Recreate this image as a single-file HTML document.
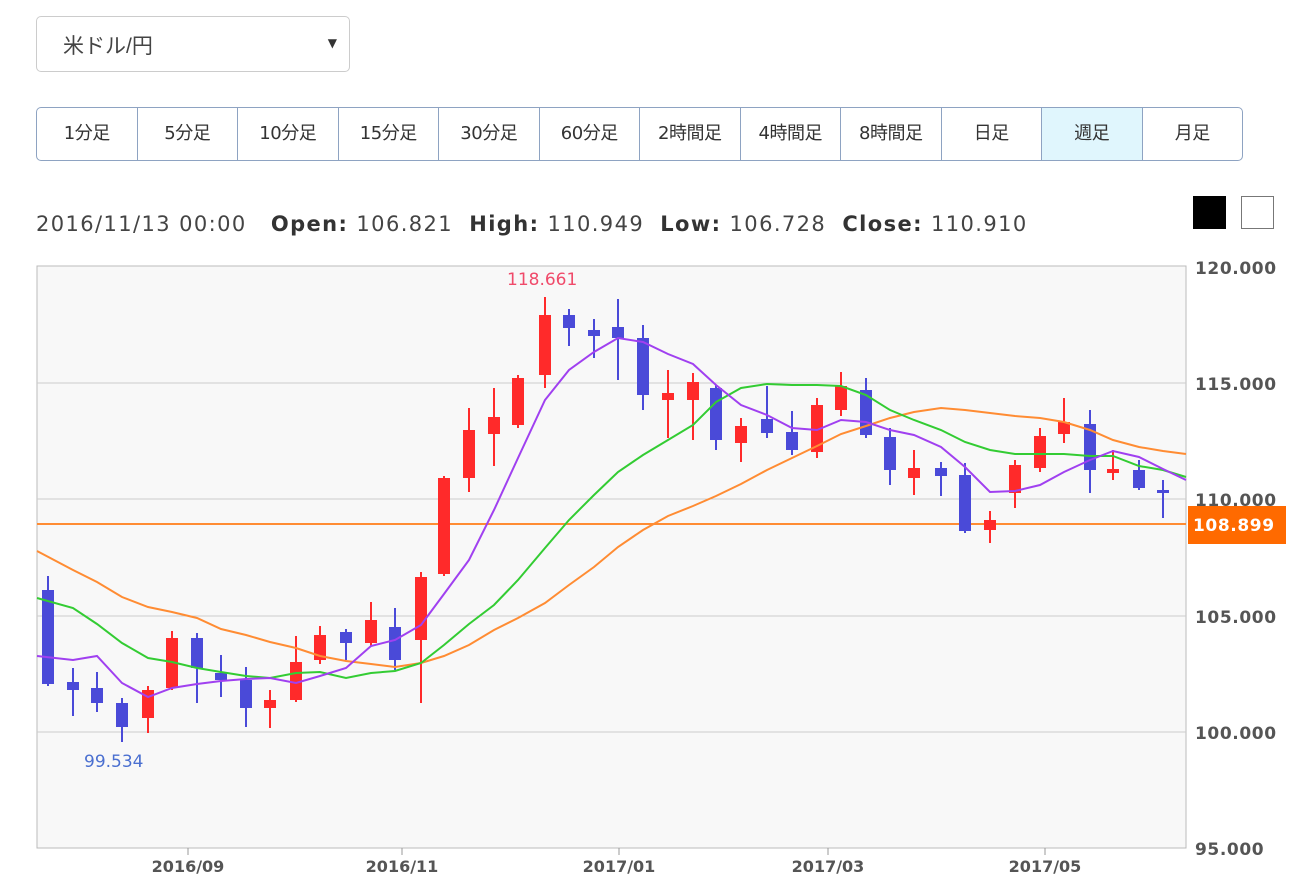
<!DOCTYPE html>
<html><head><meta charset="utf-8"><style>
body{margin:0;background:#fff;width:1300px;height:885px;overflow:hidden;font-family:"DejaVu Sans","Noto Sans CJK JP",sans-serif;color:#333}
.sel{position:absolute;left:36px;top:16px;width:314px;height:56px;border:1px solid #ccc;border-radius:5px;box-sizing:border-box}
.sel span{position:absolute;left:26px;top:13px;font-size:21px;color:#444;font-family:"Liberation Sans","Noto Sans CJK JP",sans-serif}
.sel i{position:absolute;right:12px;top:19px;font-style:normal;font-size:12px;color:#333}
.bar{position:absolute;left:36px;top:107px;width:1207px;height:54px;border:1px solid #8ea3c2;border-radius:5px;box-sizing:border-box;display:flex;overflow:hidden}
.bar div{flex:1;border-right:1px solid #8ea3c2;text-align:center;line-height:52px;font-size:18px;color:#333;letter-spacing:-0.5px}
.bar div:last-child{border-right:none}
.bar .on{background:#e0f6fd}
.hd{position:absolute;left:36px;top:212px;font-size:21px;letter-spacing:1.4px;color:#444;white-space:pre}
.hd b{color:#333}
</style></head><body>
<div class="sel"><span>米ドル/円</span><i>▼</i></div>
<div class="bar"><div>1分足</div><div>5分足</div><div>10分足</div><div>15分足</div><div>30分足</div><div>60分足</div><div>2時間足</div><div>4時間足</div><div>8時間足</div><div>日足</div><div class="on">週足</div><div>月足</div></div>
<div class="hd">2016/11/13 00:00   <b>Open:</b> 106.821  <b>High:</b> 110.949  <b>Low:</b> 106.728  <b>Close:</b> 110.910</div>
<div style="position:absolute;left:1193px;top:196px;width:33px;height:33px;background:#000"></div>
<div style="position:absolute;left:1241px;top:196px;width:33px;height:33px;border:1px solid #777;box-sizing:border-box"></div>
<svg style="position:absolute;left:0;top:0" width="1300" height="885" id="s">
<rect x="37" y="266" width="1149" height="582" fill="#f8f8f8" stroke="#bbb"/>
<g stroke="#ccc"><line x1="37" x2="1186" y1="383" y2="383"/><line x1="37" x2="1186" y1="499" y2="499"/><line x1="37" x2="1186" y1="616" y2="616"/><line x1="37" x2="1186" y1="732" y2="732"/></g>
<line x1="37" x2="1186" y1="524" y2="524" stroke="#ff8c33" stroke-width="2"/>
<g id="c"></g>
<polyline fill="none" stroke="#ff8c33" stroke-width="2" points="37,551 73,570 97,582 122,597 148,607 172,612 197,618 221,629 246,635 270,642 296,648 320,656 346,661 371,664 395,667 421,663 444,656 469,645 494,630 518,618 545,603 569,585 594,567 618,547 643,530 668,516 693,506 716,496 741,484 767,470 792,458 817,446 841,434 866,426 890,418 914,412 941,408 965,410 990,413 1015,416 1040,418 1064,422 1090,430 1113,440 1139,447 1163,451 1186,454"/>
<polyline fill="none" stroke="#33cc33" stroke-width="2" points="37,598 73,608 97,624 122,643 148,658 172,662 197,668 221,672 246,676 270,678 296,673 320,672 346,678 371,673 395,671 421,663 444,645 469,624 494,605 518,580 545,548 569,520 594,495 618,472 643,455 668,440 693,425 716,402 741,388 767,384 792,385 817,385 841,386 866,395 890,410 914,420 941,430 965,442 990,450 1015,454 1040,454 1064,454 1090,456 1113,456 1139,466 1163,470 1186,477"/>
<polyline fill="none" stroke="#a040f0" stroke-width="2" points="37,656 73,660 97,656 122,683 148,697 172,688 197,684 221,681 246,679 270,678 296,683 320,676 346,668 371,646 395,640 421,625 444,594 469,560 494,510 518,458 545,400 569,370 594,352 618,338 643,342 668,354 693,364 716,385 741,405 767,415 792,428 817,430 841,420 866,422 890,430 914,435 941,447 965,467 990,492 1015,491 1040,485 1064,472 1090,460 1113,451 1139,457 1163,469 1186,480"/>
<g fill="#555" font-size="17" font-weight="bold" letter-spacing="0.6"><text x="1195" y="274">120.000</text><text x="1195" y="390">115.000</text><text x="1195" y="506">110.000</text><text x="1195" y="623">105.000</text><text x="1195" y="739">100.000</text><text x="1195" y="855">95.000</text></g>
<rect x="1188" y="506" width="98" height="38" fill="#ff6a00"/>
<text x="1193" y="531" fill="#fff" font-size="17" font-weight="bold" letter-spacing="0.6">108.899</text>
<text x="507" y="285" fill="#f04a6a" font-size="17">118.661</text>
<text x="84" y="767" fill="#4a6fd0" font-size="17">99.534</text>
<g stroke="#999"><line x1="188" x2="188" y1="848" y2="855"/><line x1="402" x2="402" y1="848" y2="855"/><line x1="619" x2="619" y1="848" y2="855"/><line x1="828" x2="828" y1="848" y2="855"/><line x1="1045" x2="1045" y1="848" y2="855"/></g>
<g fill="#555" font-size="16" font-weight="bold" text-anchor="middle"><text x="188" y="872">2016/09</text><text x="402" y="872">2016/11</text><text x="619" y="872">2017/01</text><text x="828" y="872">2017/03</text><text x="1045" y="872">2017/05</text></g>
</svg>
<script>
var d=[[48,590,684,576,686,0],[73,682,690,668,716,0],[97,688,703,672,712,0],[122,703,727,698,742,0],[148,690,718,686,733,1],[172,638,688,631,690,1],[197,638,668,633,703,0],[221,673,680,655,697,0],[246,680,708,667,727,0],[270,700,708,690,728,1],[296,662,700,636,702,1],[320,635,660,626,664,1],[346,632,643,629,660,0],[371,620,643,602,646,1],[395,627,660,608,670,0],[421,577,640,572,703,1],[444,478,574,476,576,1],[469,430,478,408,492,1],[494,417,434,388,466,1],[518,378,425,375,428,1],[545,315,375,297,388,1],[569,315,328,309,346,0],[594,330,336,319,358,0],[618,327,338,299,380,0],[643,338,395,325,410,0],[668,393,400,370,438,1],[693,382,400,373,440,1],[716,388,440,385,450,0],[741,426,443,418,462,1],[767,419,433,386,438,0],[792,432,450,411,455,0],[817,405,452,398,458,1],[841,386,410,372,416,1],[866,390,435,378,438,0],[890,437,470,428,485,0],[914,468,478,450,495,1],[941,468,476,462,496,0],[965,475,531,463,533,0],[990,520,530,511,543,1],[1015,465,493,460,508,1],[1040,436,468,428,472,1],[1064,422,434,398,443,1],[1090,424,470,410,493,0],[1113,469,473,450,480,1],[1139,470,488,460,490,0],[1163,490,493,480,518,0]];
var h='';d.forEach(function(c){var col=c[5]?'#ff2a2a':'#4a4ad8';h+='<line x1="'+c[0]+'" x2="'+c[0]+'" y1="'+c[3]+'" y2="'+c[4]+'" stroke="'+col+'" stroke-width="2"/><rect x="'+(c[0]-6)+'" y="'+c[1]+'" width="12" height="'+Math.max(3,c[2]-c[1])+'" fill="'+col+'"/>';});
document.getElementById('c').innerHTML=h;
</script>
</body></html>
